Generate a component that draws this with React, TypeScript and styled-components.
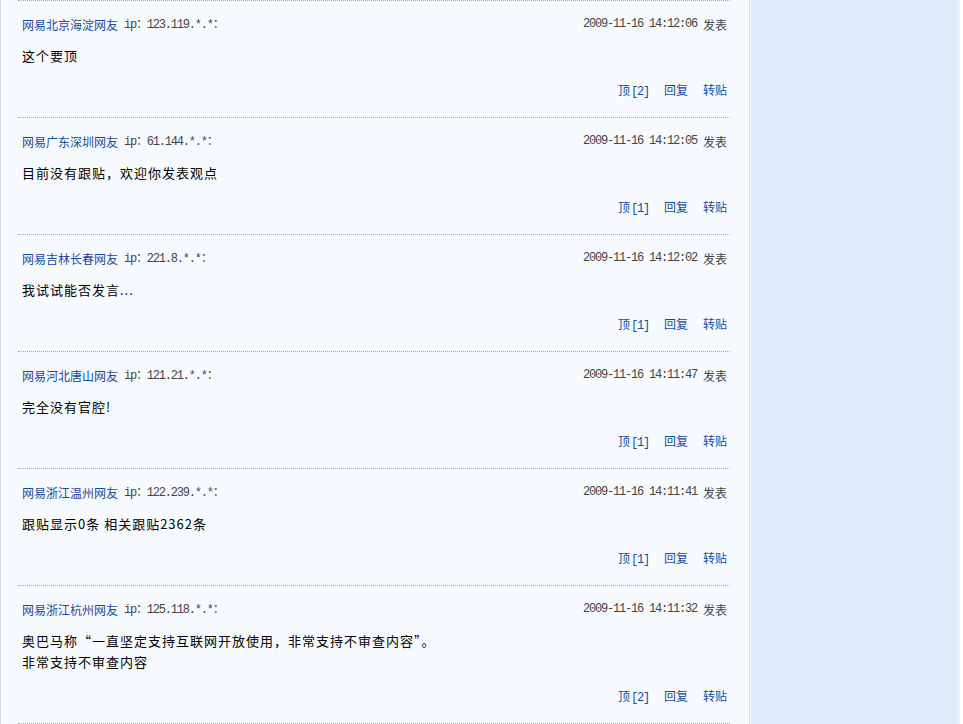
import React from 'react';
import styled, { createGlobalStyle } from 'styled-components';

const GlobalStyle = createGlobalStyle`
  html, body {
    margin: 0;
    padding: 0;
    background: #fff;
  }
  body {
    font-family: "Noto Sans CJK SC", "Liberation Sans", sans-serif;
    font-size: 12px;
  }
`;

const Page = styled.div`
  display: flex;
  height: 724px;
  overflow: hidden;
`;

const Main = styled.div`
  width: 747px;
  background: #f7fbff;
  border-left: 1px solid #d3dce6;
  border-right: 1px solid #ffffff;
  box-shadow: 1px 0 0 #d6e2ee;
`;

const Side = styled.div`
  width: 206px;
  margin-left: 2px;
  background: #ddebf8;
  border-right: 3px solid #e9f1f9;
`;

const List = styled.div`
  margin-left: 17px;
  width: 712px;
`;

const Entry = styled.div`
  border-top: 1px dotted #a8a8a8;
  padding: 15px 3px 18px 4px;
`;

const Head = styled.div`
  display: flex;
  justify-content: space-between;
  align-items: center;
  height: 18px;
`;

const User = styled.div`
  display: flex;
  align-items: center;
  gap: 6px;
`;

const Name = styled.a`
  color: #184a9c;
  text-decoration: none;
  line-height: 18px;
`;

const Mono = styled.span`
  font-family: "Liberation Mono", "Noto Sans CJK SC", monospace;
  font-size: 12px;
  letter-spacing: -1.2px;
  color: #444;
  line-height: 1;
`;

const Stamp = styled.div`
  color: #444;
  display: flex;
  align-items: center;
  gap: 6px;
  margin-top: -2px;
`;

const Body = styled.div`
  margin-top: 11px;
  line-height: 21px;
  color: #000;
  font-size: 13px;
  letter-spacing: 1px;
  white-space: pre-line;
`;

const Digits = styled.span`
  font-family: "Liberation Mono", monospace;
  font-size: 12px;
  letter-spacing: -1.2px;
  line-height: 1;
  margin-left: 1px;
`;

const Actions = styled.div`
  margin-top: 15px;
  display: flex;
  justify-content: flex-end;
  gap: 15px;
  height: 18px;
  align-items: center;
`;

const Action = styled.a`
  color: #184a9c;
  text-decoration: none;
  line-height: 18px;
`;

const Bottom = styled.div`
  border-top: 1px dotted #a8a8a8;
`;

type Post = {
  name: string;
  ip: string;
  time: string;
  body: string;
  up: number;
};

const posts: Post[] = [
  { name: '网易北京海淀网友', ip: '123.119.*.*', time: '2009-11-16 14:12:06', body: '这个要顶', up: 2 },
  { name: '网易广东深圳网友', ip: '61.144.*.*', time: '2009-11-16 14:12:05', body: '目前没有跟贴，欢迎你发表观点', up: 1 },
  { name: '网易吉林长春网友', ip: '221.8.*.*', time: '2009-11-16 14:12:02', body: '我试试能否发言...', up: 1 },
  { name: '网易河北唐山网友', ip: '121.21.*.*', time: '2009-11-16 14:11:47', body: '完全没有官腔!', up: 1 },
  { name: '网易浙江温州网友', ip: '122.239.*.*', time: '2009-11-16 14:11:41', body: '跟贴显示0条 相关跟贴2362条', up: 1 },
  {
    name: '网易浙江杭州网友',
    ip: '125.118.*.*',
    time: '2009-11-16 14:11:32',
    body: '奥巴马称“一直坚定支持互联网开放使用，非常支持不审查内容”。\n非常支持不审查内容',
    up: 2,
  },
];

const App = () => {
  return <>
    <GlobalStyle />
    <Page>
      <Main>
        <List>
          {posts.map((p, i) => (
            <Entry key={i}>
              <Head>
                <User>
                  <Name href="#">{p.name}</Name>
                  <Mono>ip：{p.ip}：</Mono>
                </User>
                <Stamp>
                  <Mono>{p.time}</Mono>
                  <span>发表</span>
                </Stamp>
              </Head>
              <Body>{p.body}</Body>
              <Actions>
                <Action href="#">顶<Digits>[{p.up}]</Digits></Action>
                <Action href="#">回复</Action>
                <Action href="#">转贴</Action>
              </Actions>
            </Entry>
          ))}
          <Bottom />
        </List>
      </Main>
      <Side />
    </Page>
  </>
}

export default App;
